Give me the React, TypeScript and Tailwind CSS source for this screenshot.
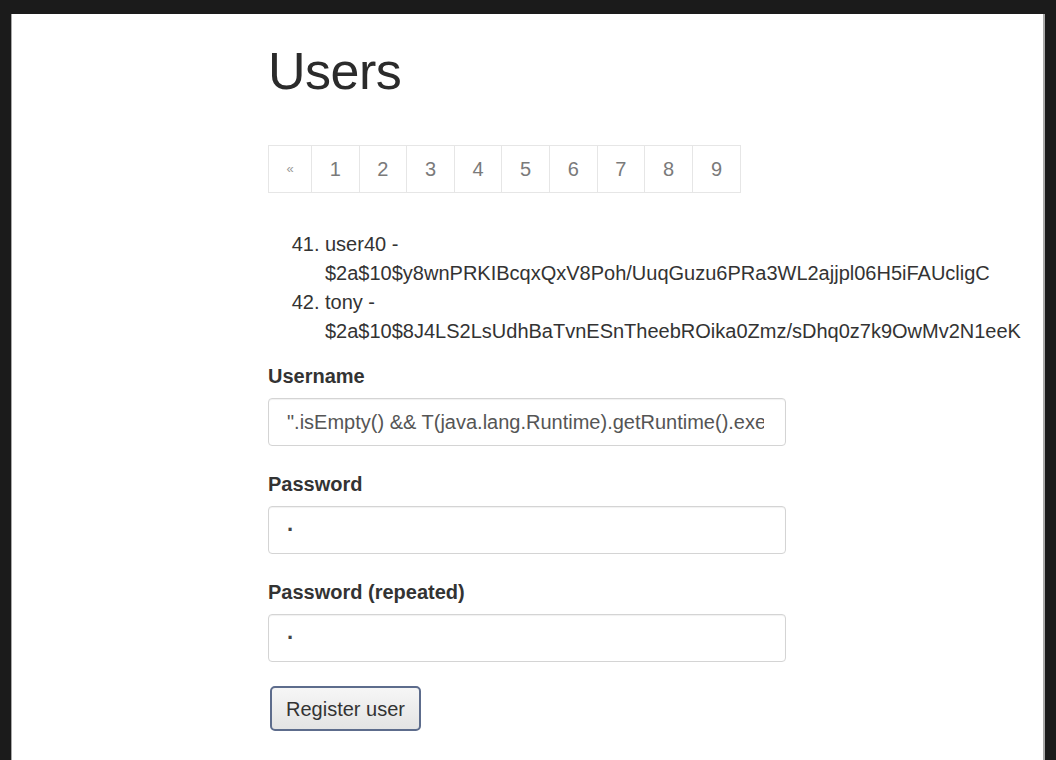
import { useState } from "react";

const pages = ["1", "2", "3", "4", "5", "6", "7", "8", "9"];

const users = [
  { id: 41, name: "user40", hash: "$2a$10$y8wnPRKIBcqxQxV8Poh/UuqGuzu6PRa3WL2ajjpl06H5iFAUcligC" },
  { id: 42, name: "tony", hash: "$2a$10$8J4LS2LsUdhBaTvnESnTheebROika0Zmz/sDhq0z7k9OwMv2N1eeK" },
];

export default function App() {
  const [username, setUsername] = useState(
    '".isEmpty() && T(java.lang.Runtime).getRuntime().exec("touch /tmp/pwned") && "'
  );
  const [password, setPassword] = useState("·");
  const [repeated, setRepeated] = useState("·");

  return (
    <div
      className="h-[760px] w-[1056px] overflow-hidden bg-[#1b1b1b] pt-[14px] pl-[11px] pr-[11px]"
      style={{ fontFamily: '"Liberation Sans", Arial, sans-serif' }}
    >
      <div className="h-full border-l border-r-2 border-[#a8a8a8] bg-white pt-[29px] pl-[256px] text-[#333]">
        <div className="w-[518px]">
          <h1 className="text-[52px] leading-[57px] font-medium tracking-[-0.5px] text-[#2b2b2b]">
            Users
          </h1>

          <nav className="mt-[45px] flex w-fit border border-[#e6e6e6]">
            <a className="flex h-[46px] w-[43px] items-center justify-center border-r border-[#e6e6e6] text-[13px] text-[#9a9a9a]">
              «
            </a>
            {pages.map((p, i) => (
              <a
                key={p}
                className={
                  "flex h-[46px] w-[47.6px] items-center justify-center text-[20px] text-[#7a7a7a]" +
                  (i < pages.length - 1 ? " border-r border-[#e6e6e6]" : "")
                }
              >
                {p}
              </a>
            ))}
          </nav>

          <ol start={41} className="mt-[37px] list-decimal pl-[57px] text-[20px] leading-[29px] text-[#333]">
            {users.map((u) => (
              <li key={u.id}>
                {u.name} - {u.hash}
              </li>
            ))}
          </ol>

          <form className="mt-[18px] flex flex-col" onSubmit={(e) => e.preventDefault()}>
            <label className="mb-[9px] text-[20px] leading-[25px] font-bold text-[#333]">Username</label>
            <input
              value={username}
              onChange={(e) => setUsername(e.target.value)}
              className="h-[48px] w-[518px] rounded-[4px] border border-[#d4d4d4] pl-[18px] pr-[21px] text-[20px] text-[#555] shadow-[inset_0_1px_1px_rgba(0,0,0,0.06)] outline-none"
            />

            <label className="mt-[26px] mb-[9px] text-[20px] leading-[25px] font-bold text-[#333]">Password</label>
            <input
              value={password}
              onChange={(e) => setPassword(e.target.value)}
              className="h-[48px] w-[518px] rounded-[4px] border border-[#d4d4d4] pl-[18px] pr-[18px] text-[22px] font-bold text-[#444] shadow-[inset_0_1px_1px_rgba(0,0,0,0.06)] outline-none"
            />

            <label className="mt-[26px] mb-[9px] text-[20px] leading-[25px] font-bold text-[#333]">
              Password (repeated)
            </label>
            <input
              value={repeated}
              onChange={(e) => setRepeated(e.target.value)}
              className="h-[48px] w-[518px] rounded-[4px] border border-[#d4d4d4] pl-[18px] pr-[18px] text-[22px] font-bold text-[#444] shadow-[inset_0_1px_1px_rgba(0,0,0,0.06)] outline-none"
            />

            <button
              type="submit"
              className="mt-[24px] ml-[2px] h-[45px] w-[151px] rounded-[5px] border-2 border-[#5d6c8c] bg-gradient-to-b from-[#f6f6f6] to-[#e4e4e4] text-[20px] text-[#333]"
            >
              Register user
            </button>
          </form>
        </div>
      </div>
    </div>
  );
}
